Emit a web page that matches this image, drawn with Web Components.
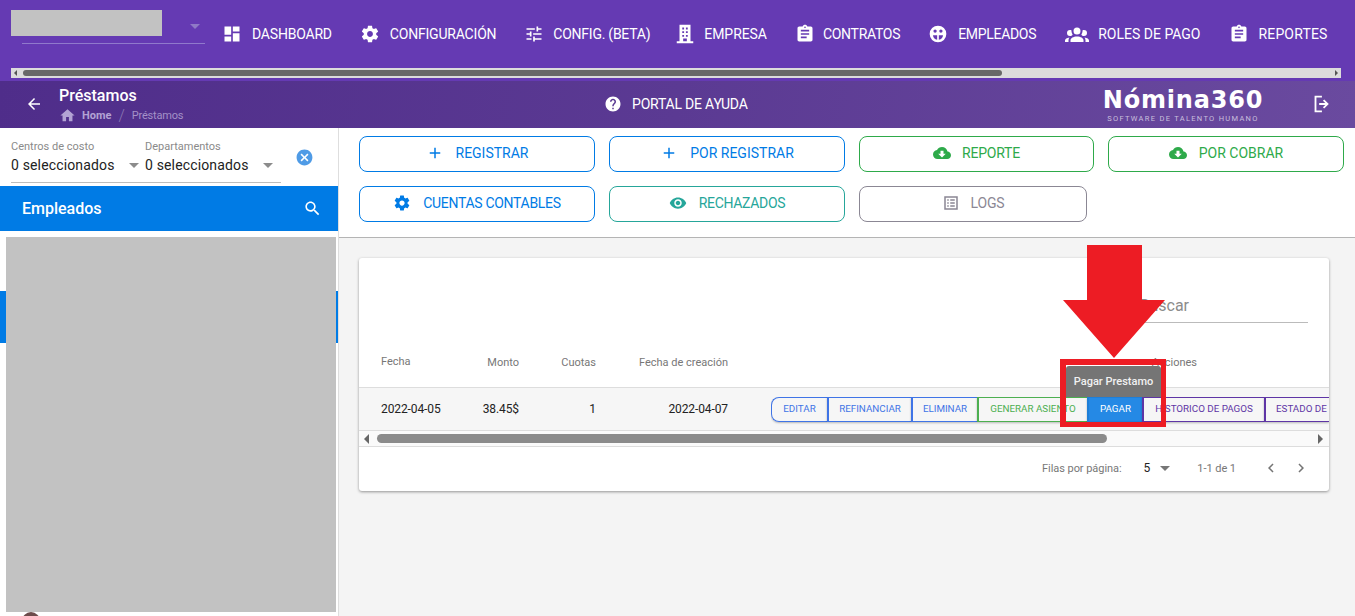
<!DOCTYPE html>
<html lang="es">
<head>
<meta charset="utf-8">
<title>Préstamos</title>
<style>
  html, body { margin: 0; height: 100%; overflow: hidden; }
  body { font-family: Roboto, "Liberation Sans", sans-serif; background: #f4f4f4; }
</style>
</head>
<body>
<app-page></app-page>

<script>
// 图标 (Material) 路径
const ICONS = {
  dashboard: 'M3 13h8V3H3v10zm0 8h8v-6H3v6zm10 0h8V11h-8v10zm0-18v6h8V3h-8z',
  gear: 'M19.43 12.98c.04-.32.07-.64.07-.98s-.03-.66-.07-.98l2.11-1.65c.19-.15.24-.42.12-.64l-2-3.46c-.12-.22-.39-.3-.61-.22l-2.49 1c-.52-.4-1.08-.73-1.69-.98l-.38-2.65C14.46 2.18 14.25 2 14 2h-4c-.25 0-.46.18-.49.42l-.38 2.65c-.61.25-1.17.59-1.69.98l-2.49-1c-.23-.09-.49 0-.61.22l-2 3.46c-.13.22-.07.49.12.64l2.11 1.65c-.04.32-.07.65-.07.98s.03.66.07.98l-2.11 1.65c-.19.15-.24.42-.12.64l2 3.46c.12.22.39.3.61.22l2.49-1c.52.4 1.08.73 1.69.98l.38 2.65c.03.24.24.42.49.42h4c.25 0 .46-.18.49-.42l.38-2.65c.61-.25 1.17-.59 1.69-.98l2.49 1c.23.09.49 0 .61-.22l2-3.46c.12-.22.07-.49-.12-.64l-2.11-1.65zM12 15.5c-1.93 0-3.5-1.57-3.5-3.5s1.57-3.5 3.5-3.5 3.5 1.57 3.5 3.5-1.57 3.5-3.5 3.5z',
  tune: 'M3 17v2h6v-2H3zM3 5v2h10V5H3zm10 16v-2h8v-2h-8v-2h-2v6h2zM7 9v2H3v2h4v2h2V9H7zm14 4v-2H11v2h10zm-6-4h2V7h4V5h-4V3h-2v6z',
  building: 'M6 2h12v18h3v2H3v-2h3V2zm3 3v2h2V5H9zm4 0v2h2V5h-2zM9 9v2h2V9H9zm4 0v2h2V9h-2zm-4 4v2h2v-2H9zm4 0v2h2v-2h-2zm-3 4v3h4v-3h-4z',
  clipboard: 'M19 3h-4.18C14.4 1.84 13.3 1 12 1c-1.3 0-2.4.84-2.82 2H5c-1.1 0-2 .9-2 2v14c0 1.1.9 2 2 2h14c1.1 0 2-.9 2-2V5c0-1.1-.9-2-2-2zm-7 0c.55 0 1 .45 1 1s-.45 1-1 1-1-.45-1-1 .45-1 1-1zm2 14H7v-2h7v2zm3-4H7v-2h10v2zm0-4H7V7h10v2z',
  face: 'M12 2a10 10 0 1 0 0 20 10 10 0 0 0 0-20zM8.5 6.5a2 2 0 1 1 0 4 2 2 0 0 1 0-4zm7 0a2 2 0 1 1 0 4 2 2 0 0 1 0-4zM6 13.5h5V19a6 6 0 0 1-5-5.5zm7 0h5a6 6 0 0 1-5 5.5v-5.5z',
  group: 'M12,5.5A3.5,3.5 0 0,1 15.5,9A3.5,3.5 0 0,1 12,12.5A3.5,3.5 0 0,1 8.5,9A3.5,3.5 0 0,1 12,5.5M5,8C5.56,8 6.08,8.15 6.53,8.42C6.38,9.85 6.8,11.27 7.66,12.38C7.16,13.34 6.16,14 5,14A3,3 0 0,1 2,11A3,3 0 0,1 5,8M19,8A3,3 0 0,1 22,11A3,3 0 0,1 19,14C17.84,14 16.84,13.34 16.34,12.38C17.2,11.27 17.62,9.85 17.47,8.42C17.92,8.15 18.44,8 19,8M5.5,18.25C5.5,16.18 8.41,14.5 12,14.5C15.59,14.5 18.5,16.18 18.5,18.25V20H5.5V18.25M0,20V18.5C0,17.11 1.89,15.94 4.45,15.6C3.86,16.28 3.5,17.22 3.5,18.25V20H0M24,20H20.5V18.25C20.5,17.22 20.14,16.28 19.55,15.6C22.11,15.94 24,17.11 24,18.5V20Z',
  back: 'M20 11H7.83l5.59-5.59L12 4l-8 8 8 8 1.41-1.41L7.83 13H20v-2z',
  home: 'M10 20v-6h4v6h5v-8h3L12 3 2 12h3v8z',
  help: 'M12 2C6.48 2 2 6.48 2 12s4.48 10 10 10 10-4.48 10-10S17.52 2 12 2zm1 17h-2v-2h2v2zm2.07-7.75l-.9.92C13.45 12.9 13 13.5 13 15h-2v-.5c0-1.1.45-2.1 1.17-2.83l1.24-1.26c.37-.36.59-.86.59-1.41 0-1.1-.9-2-2-2s-2 .9-2 2H8c0-2.21 1.79-4 4-4s4 1.79 4 4c0 .88-.36 1.68-.93 2.25z',
  exit: 'M5 3h8v2H7v14h6v2H5zM15.5 7l5 5-5 5-1.4-1.4 2.6-2.6H10v-2h6.7l-2.6-2.6z',
  plus: 'M19 13h-6v6h-2v-6H5v-2h6V5h2v6h6v2z',
  cloud: 'M19.35 10.04C18.67 6.59 15.64 4 12 4 9.11 4 6.6 5.64 5.35 8.04 2.34 8.36 0 10.91 0 14c0 3.31 2.69 6 6 6h13c2.76 0 5-2.24 5-5 0-2.64-2.05-4.78-4.65-4.96zM17 13l-5 5-5-5h3V9h4v4h3z',
  eye: 'M12 4.5C7 4.5 2.73 7.61 1 12c1.73 4.39 6 7.5 11 7.5s9.27-3.11 11-7.5c-1.73-4.39-6-7.5-11-7.5zM12 17c-2.76 0-5-2.24-5-5s2.24-5 5-5 5 2.24 5 5-2.24 5-5 5zm0-8c-1.66 0-3 1.34-3 3s1.34 3 3 3 3-1.34 3-3-1.34-3-3-3z',
  list: 'M3 3v18h18V3H3zm16 16H5V5h14v14zM7 7h2v2H7V7zm4 0h6v2h-6V7zM7 11h2v2H7v-2zm4 0h6v2h-6v-2zM7 15h2v2H7v-2zm4 0h6v2h-6v-2z',
  search: 'M15.5 14h-.79l-.28-.27C15.41 12.59 16 11.11 16 9.5 16 5.91 13.09 3 9.5 3S3 5.91 3 9.5 5.91 16 9.5 16c1.61 0 3.09-.59 4.23-1.57l.27.28v.79l5 4.99L20.49 19l-4.99-5zm-6 0C7.01 14 5 11.99 5 9.5S7.01 5 9.5 5 14 7.01 14 9.5 11.99 14 9.5 14z',
  clear: 'M12 2C6.47 2 2 6.47 2 12s4.47 10 10 10 10-4.47 10-10S17.53 2 12 2zm5 13.59L15.59 17 12 13.41 8.41 17 7 15.59 10.59 12 7 8.41 8.41 7 12 10.59 15.59 7 17 8.41 13.41 12 17 15.59z',
  prev: 'M15.41 7.41L14 6l-6 6 6 6 1.41-1.41L10.83 12z',
  next: 'M10 6L8.59 7.41 13.17 12l-4.58 4.59L10 18l6-6z'
}

function icon(name, size){
  return `<svg width="${size}" height="${size}" viewBox="0 0 24 24" fill="currentColor" style="display:block;flex:none"><path fill-rule="evenodd" d="${ICONS[name]}"/></svg>`
}

// 带模板的基类：子类提供 render()，构造时克隆到影子根
class Base extends HTMLElement{
  constructor(){
    super()
    this.attachShadow({mode: 'open'})
    let t = document.createElement('template')
    t.innerHTML = this.render()
    this.shadowRoot.append(t.content.cloneNode(true))
  }
  render(){ return '' }
}

class NavItem extends Base{
  render(){
    return `<style>
      :host{ display:flex; align-items:center; gap:var(--nav-gap, 9px); margin-right:28px; color:#fff; font-size:14px; letter-spacing:-.2px; white-space:nowrap; }
    </style>${icon(this.getAttribute('icon'), +this.getAttribute('size') || 20)}<slot></slot>`
  }
}
customElements.define('nav-item', NavItem)

class MainNav extends Base{
  render(){
    return `<style>
      :host{ display:block; height:81px; background:#653ab3; box-sizing:border-box; padding-top:9px; }
      .top{ display:flex; height:48px; padding-left:11px; }
      .company{ width:194px; margin-right:17px; position:relative; }
      .blur{ width:151px; height:26px; background:#c2c2c2; margin-top:1px; }
      .line{ height:1px; background:#9079cc; margin:7px 0 0 11px; }
      .caret{ position:absolute; left:179px; top:15px; width:0; height:0; border:5px solid transparent; border-top-color:#8f79c6; border-bottom:0; }
      .items{ display:flex; align-items:center; height:50px; }
      .bar{ display:flex; align-items:center; height:10px; margin:11px 14px 0 11px; background:#dcdcdc; padding:0 3px; gap:6px; }
      .bar i{ width:0; height:0; border:3px solid transparent; flex:none; }
      .l{ border-right-color:#555 !important; border-left:0 !important; }
      .r{ border-left-color:#555 !important; border-right:0 !important; margin-left:auto; }
      .thumb{ width:979px; height:6px; background:#686868; border-radius:3px; }
    </style>
    <div class="top">
      <div class="company"><div class="blur"></div><div class="line"></div><span class="caret"></span></div>
      <div class="items"><slot></slot></div>
    </div>
    <div class="bar"><i class="l"></i><div class="thumb"></div><i class="r"></i></div>`
  }
}
customElements.define('main-nav', MainNav)

class SubHeader extends Base{
  render(){
    return `<style>
      :host{ display:flex; align-items:center; height:47px; color:#fff; position:relative;
        background:linear-gradient(100deg,#4f2d8a 0%,#5b3a93 50%,#6a4a9f 100%); }
      .back{ margin:-2px 0 0 25px; width:34px; }
      .title{ width:300px; display:flex; flex-direction:column; }
      b{ font-size:16px; font-weight:500; line-height:20px; }
      .crumb{ display:flex; align-items:center; font-size:11px; line-height:13px; color:#a491c8; gap:5px; margin-top:1px; }
      .crumb svg{ color:#b3a3d4; }
      .crumb strong{ font-weight:700; color:#b3a3d4; margin-left:1px; }
      .crumb u{ text-decoration:none; font-size:16px; font-weight:300; margin:0 2px; color:#8b78b4; }
      .crumb span{ letter-spacing:-.2px; }
      .help{ display:flex; align-items:center; gap:10px; font-size:14px; letter-spacing:-.2px; margin:-2px 0 0 245px; }
      .logo{ margin-left:auto; margin-right:46px; display:flex; flex-direction:column; align-items:center; width:162px; margin-top:-1px; }
      .logo span{ font-family:"DejaVu Sans", "Open Sans", sans-serif; font-weight:700; font-size:24px; line-height:28px; letter-spacing:.8px; white-space:nowrap; }
      .logo small{ font-size:7.5px; letter-spacing:1.3px; color:#c9bfdc; line-height:9px; white-space:nowrap; }
      .exit{ margin:-2px 23px 0 0; }
    </style>
    <div class="back">${icon('back', 18)}</div>
    <div class="title"><b>Préstamos</b>
      <div class="crumb">${icon('home', 17)}<strong>Home</strong><u>/</u><span>Préstamos</span></div></div>
    <div class="help">${icon('help', 18)}<span>PORTAL DE AYUDA</span></div>
    <div class="logo"><span>Nómina360</span><small>SOFTWARE DE TALENTO HUMANO</small></div>
    <div class="exit">${icon('exit', 22)}</div>`
  }
}
customElements.define('sub-header', SubHeader)

class SideFilter extends Base{
  render(){
    return `<style>
      :host{ display:block; width:128px; }
      label{ display:block; font-size:11px; color:#8a8a8a; line-height:14px; }
      .v{ display:flex; justify-content:space-between; align-items:center; font-size:14px; line-height:22px; color:#222; letter-spacing:.15px; }
      .v i{ width:0; height:0; border:5px solid transparent; border-top-color:#8c8c8c; border-bottom:0; }
    </style><label>${this.getAttribute('label')}</label><div class="v"><span><slot></slot></span><i></i></div>`
  }
}
customElements.define('side-filter', SideFilter)

class SidePanel extends Base{
  render(){
    return `<style>
      :host{ display:flex; flex-direction:column; width:338px; height:100%; background:#fff; border-right:1px solid #dedede; flex:none; position:relative; overflow:hidden; }
      .filters{ display:flex; height:58px; padding:12px 0 0 11px; box-sizing:border-box; position:relative; }
      .line{ position:absolute; left:11px; top:54px; width:270px; height:1px; background:#bdbdbd; }
      side-filter + side-filter{ margin-left:6px; }
      .x{ color:#4f9be6; margin:8px 0 0 22px; }
      .head{ display:flex; align-items:center; justify-content:space-between; height:45px; background:#007be5; color:#fff; padding:0 16px 0 22px; font-size:16px; font-weight:500; }
      .list{ flex:1; position:relative; }
      .sel{ position:absolute; left:0; right:0; top:60px; height:52px; background:#007be5; }
      .blur{ position:absolute; left:6px; top:6px; width:330px; height:375px; background:#c2c2c2; }
      .avatar{ position:absolute; left:22px; top:381px; width:18px; height:18px; border-radius:50%; background:#6d4c4c; }
    </style>
    <div class="filters">
      <side-filter label="Centros de costo">0 seleccionados</side-filter>
      <side-filter label="Departamentos">0 seleccionados</side-filter>
      <div class="line"></div>
      <div class="x">${icon('clear', 19)}</div>
    </div>
    <div class="head"><span>Empleados</span>${icon('search', 19)}</div>
    <div class="list"><div class="sel"></div><div class="blur"></div><div class="avatar"></div></div>`
  }
}
customElements.define('side-panel', SidePanel)

class ActionButton extends Base{
  render(){
    return `<style>
      :host{ display:flex; align-items:center; justify-content:center; gap:12px; box-sizing:border-box; height:36px; padding-bottom:2px; border:1px solid currentColor; border-radius:8px; font-size:14px; letter-spacing:-.2px; background:#fff; white-space:nowrap; }
    </style>${icon(this.getAttribute('icon'), 18)}<slot></slot>`
  }
}
customElements.define('action-button', ActionButton)

class GroupButton extends Base{
  render(){
    return `<style>
      :host{ display:flex; align-items:center; justify-content:center; flex:none; box-sizing:border-box; height:25px; padding-bottom:2px; border:1px solid currentColor; border-right-width:0; border-left-width:2px; font-size:9.8px; white-space:nowrap; box-shadow:0 1px 2px rgba(0,0,0,.25); }
      :host([first]){ border-radius:8px 0 0 8px; border-left-width:1px; }
      :host([solid]){ background:#2589e5; border-color:#1f7fd8; }
      :host([solid]) span{ color:#fff; }
    </style><span><slot></slot></span>`
  }
}
customElements.define('group-button', GroupButton)

class LoanTable extends Base{
  render(){
    return `<style>
      :host{ display:block; height:233px; background:#fff; border-radius:3px; box-shadow:0 1px 3px rgba(0,0,0,.4); overflow:hidden; color:#222; }
      .search{ height:90px; display:flex; justify-content:flex-end; padding:0 21px 0 0; }
      .search div{ width:180px; height:65px; box-sizing:border-box; border-bottom:1px solid #bbb; text-align:right; padding:38px 119px 0 0; font-size:16px; line-height:19px; color:#8c8c8c; }
      .cols{ display:grid; grid-template-columns:103px 57px 77px 132px 1fr; height:40px; align-items:center; font-size:11px; color:#777; border-bottom:1px solid #ddd; padding-bottom:10px; box-sizing:border-box; }
      .cols > :nth-child(1){ padding-left:22px; margin-top:-2px; }
      .cols > :nth-child(n+2):nth-child(-n+4){ text-align:right; }
      .cols > :nth-child(5){ text-align:right; padding-right:132px; }
      .row{ display:grid; grid-template-columns:103px 57px 77px 132px 1fr; height:43px; align-items:center; font-size:12px; letter-spacing:-.1px; background:#f6f6f6; border-bottom:1px solid #ddd; box-sizing:border-box; }
      .row > :nth-child(1){ padding-left:22px; }
      .row > :nth-child(n+2):nth-child(-n+4){ text-align:right; }
      .group{ display:flex; margin-left:43px; overflow:hidden; padding-bottom:3px; margin-top:4px; letter-spacing:0; }
      .scroll{ display:flex; align-items:center; background:#fafafa; border-bottom:1px solid #ddd; padding:0 6px 0 5px; gap:8px; height:15px; }
      .scroll i{ flex:none; width:0; height:0; border:5px solid transparent; }
      .scroll .l{ border-right-color:#666; border-left:0; }
      .scroll .r{ border-left-color:#666; border-right:0; margin-left:auto; }
      .thumb{ width:730px; height:9px; border-radius:5px; background:#8b8b8b; }
      .foot{ display:flex; align-items:center; justify-content:flex-end; height:44px; box-sizing:border-box; padding:0 19px 2px 0; font-size:11px; letter-spacing:-.05px; color:#777; }
      .foot b{ font-weight:400; font-size:12px; color:#222; margin-left:22px; }
      .foot i{ width:0; height:0; border:5px solid transparent; border-top-color:#777; border-bottom:0; margin:0 0 0 10px; }
      .foot .n{ margin:0 26px 0 27px; }
      .foot svg + svg{ margin-left:12px; }
      .foot svg{ color:#757575; }
    </style>
    <div class="search"><div>Buscar</div></div>
    <div class="cols"><span>Fecha</span><span>Monto</span><span>Cuotas</span><span>Fecha de creación</span><span>Acciones</span></div>
    <div class="row"><span>2022-04-05</span><span>38.45$</span><span>1</span><span>2022-04-07</span><div class="group"><slot></slot></div></div>
    <div class="scroll"><i class="l"></i><div class="thumb"></div><i class="r"></i></div>
    <div class="foot"><span>Filas por página:</span><b>5</b><i></i><span class="n">1-1 de 1</span>${icon('prev', 18)}${icon('next', 18)}</div>`
  }
}
customElements.define('loan-table', LoanTable)

// 页面：红色箭头、红框、提示框都是盖在内容上的标注
class AppPage extends Base{
  render(){
    // 图标, 文字, 尺寸, 间距, 右外边距, 字距
    const nav = [
      ['dashboard','DASHBOARD',20,10,28,-.2],
      ['gear','CONFIGURACIÓN',20,10,28,-.2],
      ['tune','CONFIG. (BETA)',20,9,24,-.25],
      ['building','EMPRESA',22,8,28,-.05],
      ['clipboard','CONTRATOS',20,8,28,-.3],
      ['face','EMPLEADOS',20,10,29,-.3],
      ['group','ROLES DE PAGO',24,9,28,0],
      ['clipboard','REPORTES',20,10,0,.15]
    ]
    return `<style>
      :host{ display:flex; flex-direction:column; width:1355px; height:616px; position:relative; overflow:hidden; }
      .body{ display:flex; flex:1; min-height:0; }
      main{ flex:1; min-width:0; }
      .actions{ display:grid; grid-template-columns:236px 236px 235px 236px; column-gap:14px; row-gap:14px; padding:8px 11px 15px 20px; height:86px; background:#fff; border-bottom:1px solid #b4b4b4; }
      .blue{ color:#007be5; } .teal{ color:#26a69a; } .green{ color:#2eaa4a; } .gray{ color:#8b8794; }
      .content{ padding:20px 26px 0 20px; }
      .arrow{ position:absolute; left:1063px; top:245px; }
      .tip{ position:absolute; left:1066px; top:366px; width:95px; height:31px; background:#757575; color:#f1f1f1; font-size:11px; font-weight:500; display:flex; align-items:center; justify-content:center; border-radius:3px 3px 0 0; white-space:nowrap; }
      .box{ position:absolute; left:1060px; top:359px; width:106px; height:68px; box-sizing:border-box; border:6px solid #ed1c24; border-right-width:5px; border-bottom-width:5px; }
    </style>
    <main-nav>${nav.map(n => `<nav-item icon="${n[0]}" size="${n[2]}" style="--nav-gap:${n[3]}px;margin-right:${n[4]}px;letter-spacing:${n[5]}px">${n[1]}</nav-item>`).join('')}</main-nav>
    <sub-header></sub-header>
    <div class="body">
      <side-panel></side-panel>
      <main>
        <div class="actions">
          <action-button class="blue" icon="plus" style="letter-spacing:0">REGISTRAR</action-button>
          <action-button class="blue" icon="plus" style="letter-spacing:0">POR REGISTRAR</action-button>
          <action-button class="green" icon="cloud" style="gap:11px">REPORTE</action-button>
          <action-button class="green" icon="cloud" style="letter-spacing:0">POR COBRAR</action-button>
          <action-button class="blue" icon="gear" style="letter-spacing:-.3px">CUENTAS CONTABLES</action-button>
          <action-button class="teal" icon="eye" style="letter-spacing:-.3px">RECHAZADOS</action-button>
          <action-button class="gray" icon="list" style="width:228px;gap:11px">LOGS</action-button>
        </div>
        <div class="content">
          <loan-table>
            <group-button first style="color:#3f74e6;width:56px">EDITAR</group-button>
            <group-button style="color:#3f74e6;width:84px">REFINANCIAR</group-button>
            <group-button style="color:#3f74e6;width:66px">ELIMINAR</group-button>
            <group-button style="color:#4caf50;width:110px">GENERAR ASIENTO</group-button>
            <group-button solid style="width:55px">PAGAR</group-button>
            <group-button style="color:#5e35a5;width:122px">HISTORICO DE PAGOS</group-button>
            <group-button style="color:#5e35a5;width:65px;justify-content:flex-start;padding-left:10px">ESTADO DE</group-button>
          </loan-table>
        </div>
      </main>
    </div>
    <svg class="arrow" width="102" height="113" viewBox="0 0 102 113"><path d="M24 0h55v55h23L51 113 0 55h24z" fill="#ed1c24"/></svg>
    <div class="box"></div>
    <div class="tip">Pagar Prestamo</div>`
  }
}
customElements.define('app-page', AppPage)
</script>
</body>
</html>
